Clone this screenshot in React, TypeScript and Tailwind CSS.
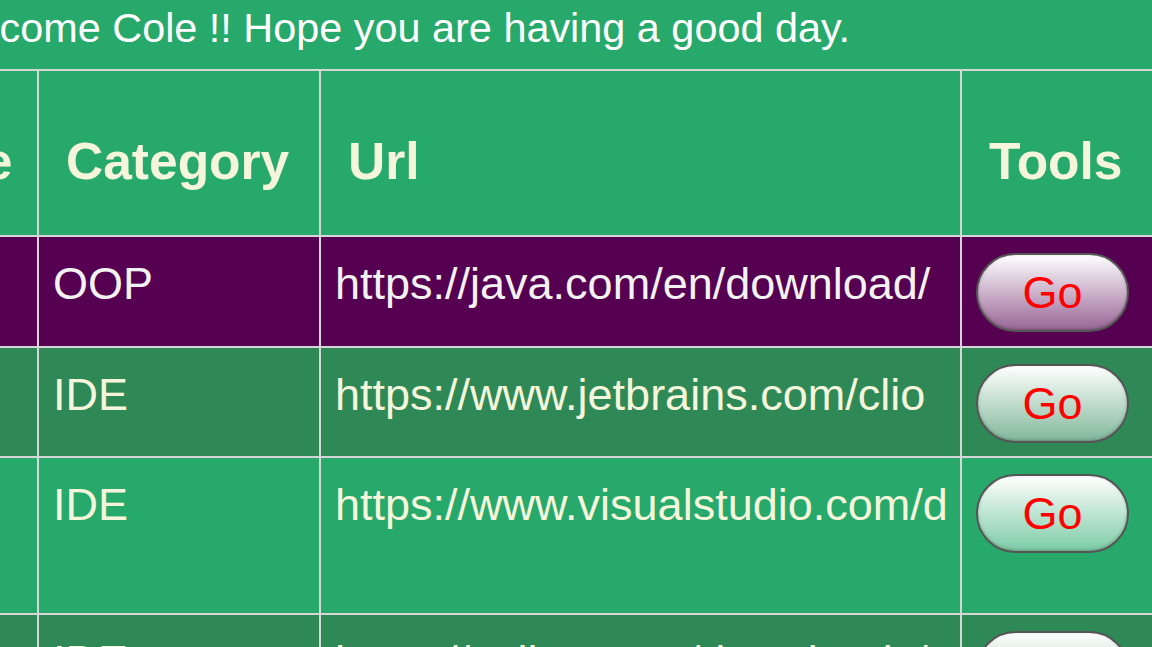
import React from 'react';

type Link = {
  name: string;
  category: string;
  url: string;
  rowClass: string;
  textClass: string;
};

const links: Link[] = [
  { name: 'Java', category: 'OOP', url: 'https://java.com/en/download/', rowClass: 'bg-[#550050] h-[109px]', textClass: 'text-[#f2f2f2]' },
  { name: 'CLion', category: 'IDE', url: 'https://www.jetbrains.com/clio', rowClass: 'bg-[#2e8957] h-[108px]', textClass: 'text-[#f5f5dc]' },
  { name: 'Visual Studio', category: 'IDE', url: 'https://www.visualstudio.com/downloads/', rowClass: 'bg-[#26a96a] h-[155px]', textClass: 'text-[#f5f5dc]' },
  { name: 'Eclipse', category: 'IDE', url: 'https://eclipse.org/downloads/', rowClass: 'bg-[#2e8957] h-[109px]', textClass: 'text-[#f5f5dc]' },
];

const GoButton = () => (
  <button className="flex h-[79px] w-[153px] items-center justify-center rounded-full border-2 border-[#555555] bg-linear-to-b from-white to-white/40 text-[45px] leading-none text-[#ff0000] shadow-[inset_0_-1px_3px_rgba(0,0,0,0.25)]">
    Go
  </button>
);

export default function App() {
  return (
    <div className="h-[647px] w-[1152px] overflow-hidden bg-[#26a96a] font-['Liberation_Sans',Arial,sans-serif]">
      <p className="ml-[-71px] h-[69px] whitespace-nowrap pt-[5px] text-[41.4px] leading-[47px] text-white">
        Welcome Cole !! Hope you are having a good day.
      </p>

      <div className="ml-[-155px] grid w-max grid-cols-[192px_280px_639px_200px] gap-[2px] bg-[#d6d6d6] pt-[2px]">
        {/* header */}
        {['Name', 'Category', 'Url', 'Tools'].map((h) => (
          <div
            key={h}
            className="h-[164px] bg-[#26a96a] pl-[27px] pt-[62px] text-[51.5px] font-bold leading-[57px] text-[#f5f5dc] whitespace-nowrap"
          >
            {h}
          </div>
        ))}

        {links.map((l) => (
          <React.Fragment key={l.url}>
            <div className={`${l.rowClass} ${l.textClass} overflow-hidden px-[14px] pt-[15px] text-[45px] leading-[63px]`}>
              {l.name}
            </div>
            <div className={`${l.rowClass} ${l.textClass} overflow-hidden px-[14px] pt-[15px] text-[45px] leading-[63px] whitespace-nowrap`}>
              {l.category}
            </div>
            <div className={`${l.rowClass} ${l.textClass} overflow-hidden px-[14px] pt-[15px] text-[45px] leading-[63px]`}>
              <div className="overflow-hidden whitespace-nowrap">{l.url}</div>
            </div>
            <div className={`${l.rowClass} pl-[14px] pt-[16px]`}>
              <GoButton />
            </div>
          </React.Fragment>
        ))}
      </div>
    </div>
  );
}
